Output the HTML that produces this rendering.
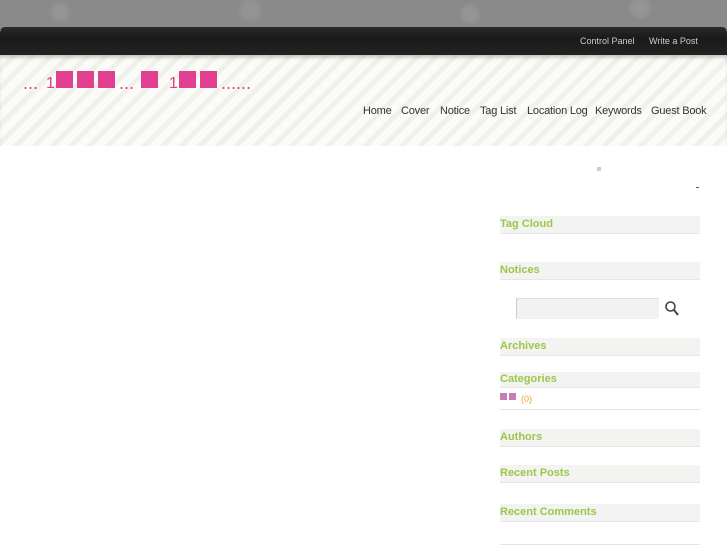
<!DOCTYPE html>
<html><head><meta charset="utf-8"><style>
body{margin:0;width:727px;height:545px;overflow:hidden;background:#fff;font-family:"Liberation Sans",sans-serif;position:relative}
.top{position:absolute;left:0;top:0;width:727px;height:30px;background:radial-gradient(circle at 60px 12px,#959595 6px,transparent 12px),radial-gradient(circle at 250px 10px,#939393 7px,transparent 13px),radial-gradient(circle at 470px 14px,#959595 6px,transparent 12px),radial-gradient(circle at 640px 8px,#949494 7px,transparent 13px),#8a8a8a}
.bar{position:absolute;left:0;top:27px;width:727px;height:28px;background:linear-gradient(#2a2a2a,#1a1a1a 40%,#222);border-radius:5px 5px 0 0}
.bar span{position:absolute;top:9px;color:#ccc;font-size:9px}
.hdr{position:absolute;left:0;top:55px;width:727px;height:91px;background:repeating-linear-gradient(135deg,#fbfbf8 0 8px,#f1f1ec 8px 13px);box-shadow:inset 0 4px 4px -2px rgba(0,0,0,.25)}
.logo{position:absolute;top:70px;color:#e0408f;font-size:18px}
.sq{position:absolute;background:#e0408f;width:17px;height:17px;top:71px}
.nav{position:absolute;top:105px;font-size:11px;color:#333;letter-spacing:-.2px}
.h{position:absolute;left:500px;width:200px;height:17px;background:#f3f3f1;border-bottom:1px solid #e6e6e6;color:#9bc74a;font-weight:bold;font-size:11px;line-height:17px}
</style></head><body>
<div class="top"></div>
<div class="bar"><span style="left:580px">Control Panel</span><span style="left:649px">Write a Post</span></div>
<div class="hdr"></div>
<div class="logo" style="left:23px;top:73px">...</div>
<div class="logo" style="left:46px;top:75px;font-size:16px">1</div>
<div class="sq" style="left:56px"></div><div class="sq" style="left:77px"></div><div class="sq" style="left:98px"></div>
<div class="logo" style="left:119px;top:73px">...</div>
<div class="sq" style="left:141px"></div>
<div class="logo" style="left:169px;top:75px;font-size:16px">1</div>
<div class="sq" style="left:179px"></div><div class="sq" style="left:200px"></div>
<div class="logo" style="left:221px;top:73px">......</div>
<div class="nav" style="left:363px">Home</div>
<div class="nav" style="left:401px">Cover</div>
<div class="nav" style="left:440px">Notice</div>
<div class="nav" style="left:480px">Tag List</div>
<div class="nav" style="left:527px">Location Log</div>
<div class="nav" style="left:595px">Keywords</div>
<div class="nav" style="left:651px">Guest Book</div>
<div style="position:absolute;left:597px;top:167px;width:4px;height:4px;background:#ccc"></div>
<div style="position:absolute;left:696px;top:187px;width:3px;height:1px;background:#555"></div>
<div class="h" style="top:216px">Tag Cloud</div>
<div class="h" style="top:262px">Notices</div>
<div style="position:absolute;left:516px;top:298px;width:142px;height:20px;background:#f2f2f2;border-left:1px solid #ccc;border-top:1px solid #ddd"></div>
<svg style="position:absolute;left:664px;top:300px" width="16" height="18"><circle cx="6.5" cy="6.5" r="4.5" fill="none" stroke="#444" stroke-width="1.6"/><line x1="10" y1="10" x2="14" y2="15" stroke="#444" stroke-width="2"/></svg>
<div class="h" style="top:338px">Archives</div>
<div class="h" style="top:372px;height:15px;line-height:15px">Categories</div>
<div style="position:absolute;left:500px;top:393px;width:7px;height:7px;background:#c97bb5"></div>
<div style="position:absolute;left:509px;top:393px;width:7px;height:7px;background:#c97bb5"></div>
<div style="position:absolute;left:521px;top:394px;font-size:9px;color:#f0a030">(0)</div>
<div style="position:absolute;left:500px;top:409px;width:200px;height:1px;background:#e4e4e4"></div>
<div class="h" style="top:429px">Authors</div>
<div class="h" style="top:465px">Recent Posts</div>
<div class="h" style="top:504px">Recent Comments</div>
<div style="position:absolute;left:500px;top:544px;width:200px;height:1px;background:#e4e4e4"></div>
</body></html>
